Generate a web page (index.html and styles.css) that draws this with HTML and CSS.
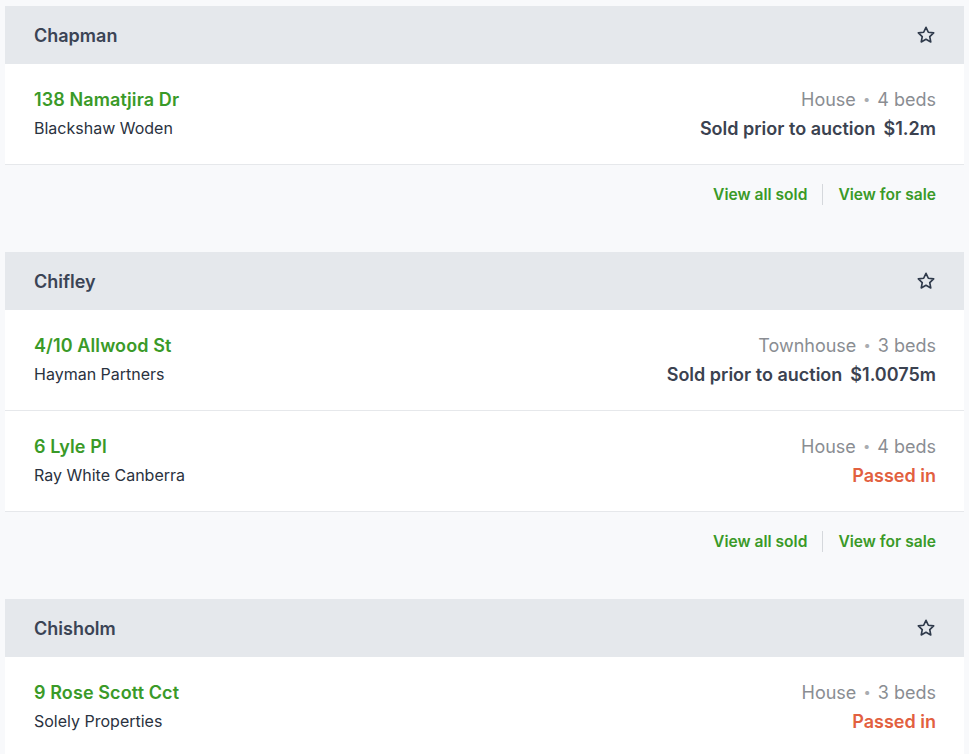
FILE: index.html
```html
<!DOCTYPE html>
<html>
<head>
<meta charset="utf-8">
<link rel="stylesheet" href="styles.css">
</head>
<body>
<div class="page">
  <section class="suburb">
    <div class="suburb-head">
      <span class="suburb-name">Chapman</span>
      <svg class="star" viewBox="0 0 24 24" width="20" height="20"><path d="M12 2.8l2.8 5.9 6.4.8-4.7 4.4 1.2 6.4L12 17.2l-5.7 3.1 1.2-6.4-4.7-4.4 6.4-.8z" fill="none" stroke="#2f3a4b" stroke-width="2" stroke-linejoin="round"/></svg>
    </div>
    <div class="listing">
      <div class="info">
        <a class="address">138 Namatjira Dr</a>
        <span class="agent">Blackshaw Woden</span>
      </div>
      <div class="result">
        <span class="meta">House <span class="dot">•</span> 4 beds</span>
        <span class="outcome"><span>Sold prior to auction</span><span class="price">$1.2m</span></span>
      </div>
    </div>
    <div class="suburb-foot">
      <a class="link">View all sold</a>
      <span class="sep"></span>
      <a class="link">View for sale</a>
    </div>
  </section>

  <section class="suburb">
    <div class="suburb-head">
      <span class="suburb-name">Chifley</span>
      <svg class="star" viewBox="0 0 24 24" width="20" height="20"><path d="M12 2.8l2.8 5.9 6.4.8-4.7 4.4 1.2 6.4L12 17.2l-5.7 3.1 1.2-6.4-4.7-4.4 6.4-.8z" fill="none" stroke="#2f3a4b" stroke-width="2" stroke-linejoin="round"/></svg>
    </div>
    <div class="listing">
      <div class="info">
        <a class="address">4/10 Allwood St</a>
        <span class="agent">Hayman Partners</span>
      </div>
      <div class="result">
        <span class="meta">Townhouse <span class="dot">•</span> 3 beds</span>
        <span class="outcome"><span>Sold prior to auction</span><span class="price">$1.0075m</span></span>
      </div>
    </div>
    <div class="listing">
      <div class="info">
        <a class="address">6 Lyle Pl</a>
        <span class="agent">Ray White Canberra</span>
      </div>
      <div class="result">
        <span class="meta">House <span class="dot">•</span> 4 beds</span>
        <span class="outcome passed">Passed in</span>
      </div>
    </div>
    <div class="suburb-foot">
      <a class="link">View all sold</a>
      <span class="sep"></span>
      <a class="link">View for sale</a>
    </div>
  </section>

  <section class="suburb">
    <div class="suburb-head">
      <span class="suburb-name">Chisholm</span>
      <svg class="star" viewBox="0 0 24 24" width="20" height="20"><path d="M12 2.8l2.8 5.9 6.4.8-4.7 4.4 1.2 6.4L12 17.2l-5.7 3.1 1.2-6.4-4.7-4.4 6.4-.8z" fill="none" stroke="#2f3a4b" stroke-width="2" stroke-linejoin="round"/></svg>
    </div>
    <div class="listing">
      <div class="info">
        <a class="address">9 Rose Scott Cct</a>
        <span class="agent">Solely Properties</span>
      </div>
      <div class="result">
        <span class="meta">House <span class="dot">•</span> 3 beds</span>
        <span class="outcome passed">Passed in</span>
      </div>
    </div>
  </section>
</div>
</body>
</html>
```

FILE: styles.css
```css
* { box-sizing: border-box; }
html, body {
  margin: 0;
  background: #f8f9fb;
  font-family: Inter, "Open Sans", sans-serif;
}
.page {
  padding: 6px 5px 0 5px;
}
.suburb {
  margin-bottom: 29px;
}
.suburb-head {
  height: 58px;
  background: #e5e8ec;
  display: flex;
  align-items: center;
  justify-content: space-between;
  padding: 0 28px 0 29px;
}
.suburb-name {
  font-size: 18px;
  font-weight: 600;
  color: #3b4455;
}
.star { display: block; }
.listing {
  height: 101px;
  background: #fff;
  border-bottom: 1px solid #e6e8eb;
  display: flex;
  justify-content: space-between;
  align-items: center;
  padding: 0 28px 0 29px;
}
.info, .result {
  display: flex;
  flex-direction: column;
  gap: 8px;
}
.result { align-items: flex-end; }
.address {
  font-size: 18px;
  font-weight: 600;
  color: #3a9a28;
  line-height: 21px;
  letter-spacing: 0.1px;
}
.agent {
  font-size: 16px;
  color: #2a3240;
  line-height: 21px;
}
.meta {
  font-size: 18px;
  color: #8a8d92;
  line-height: 21px;
}
.dot { color: #a9acb0; font-size: 13px; padding: 0 2px; vertical-align: 2px; }
.outcome {
  font-size: 18px;
  font-weight: 600;
  color: #3b4250;
  line-height: 21px;
  display: flex;
  gap: 8px;
}
.outcome.passed { color: #e2603f; }
.suburb-foot {
  height: 58px;
  display: flex;
  align-items: center;
  justify-content: flex-end;
  padding: 0 28px;
  gap: 15px;
}
.link {
  font-size: 15.6px;
  font-weight: 600;
  color: #3a9a28;
}
.sep {
  width: 1px;
  height: 21px;
  background: #d5d8dc;
}
```
